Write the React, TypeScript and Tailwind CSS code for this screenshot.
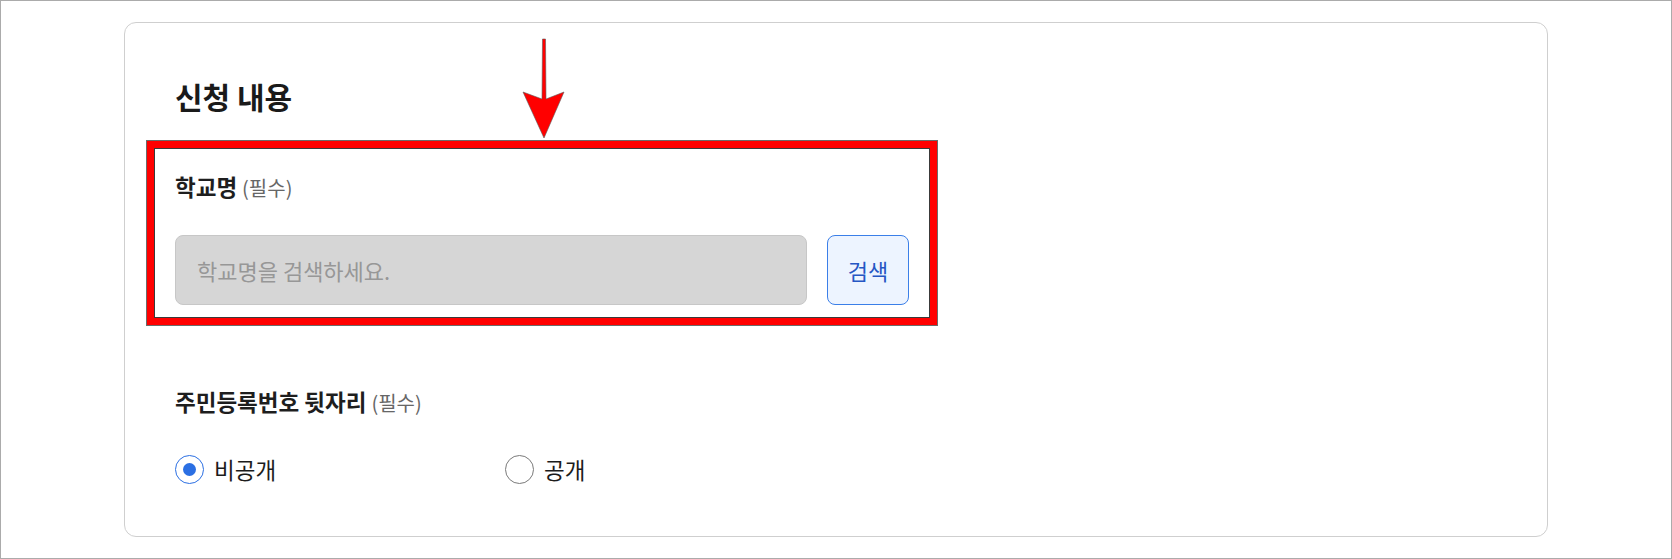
import React from "react";

const font = "font-['Noto_Sans_CJK_KR','Noto_Sans',sans-serif]";

const Required: React.FC = () => (
  <span className="ml-[5px] text-[20px] font-normal text-[#666]">(필수)</span>
);

const Radio: React.FC<{ label: string; checked?: boolean }> = ({ label, checked }) => (
  <label className="flex w-[330px] items-center gap-[10px] cursor-pointer">
    {checked ? (
      <span className="flex h-[29px] w-[29px] items-center justify-center rounded-full border-[1.5px] border-[#2b6fe3]">
        <span className="h-[13px] w-[13px] rounded-full bg-[#2b6fe3]"></span>
      </span>
    ) : (
      <span className="h-[29px] w-[29px] rounded-full border border-[#7a7a7a]"></span>
    )}
    <span className="text-[22.5px] leading-none text-[#1c1c1c]">{label}</span>
  </label>
);

const App: React.FC = () => {
  return (
    <div className={`relative h-[559px] w-full border border-[#ababab] bg-white ${font}`}>
      {/* card */}
      <div className="mx-auto mt-[21px] h-[515px] w-[1424px] rounded-[12px] border border-[#cfcfcf] pl-[50px] pt-[58px]">
        <h2 className="text-[30px] font-bold leading-none text-[#1a1a1a]">신청 내용</h2>

        {/* school name */}
        <div className="relative mt-[64px] w-[734px]">
          {/* annotation box */}
          <div className="pointer-events-none absolute -left-[28px] -right-[28px] -top-[34px] -bottom-[20px] border-[7px] border-[#ff0000] shadow-[0_0_0_1px_#6b6b6b,inset_0_0_0_1px_#3a3a3a]"></div>
          <div className="text-[22.5px] font-bold leading-none text-[#1e1e1e]">
            학교명
            <Required />
          </div>
          <div className="mt-[37px] flex gap-[20px]">
            <input
              disabled
              placeholder="학교명을 검색하세요."
              className="h-[70px] w-[632px] rounded-[8px] border border-[#c7c7c7] bg-[#d6d6d6] px-[21px] text-[22px] placeholder:text-[#979797]"
            />
            <button className="h-[70px] w-[82px] rounded-[8px] border border-[#3b7fe8] bg-[#edf4ff] text-[22px] text-[#2556c4]">
              검색
            </button>
          </div>
        </div>

        {/* resident number */}
        <div className="mt-[85px] text-[22.5px] font-bold leading-none text-[#1e1e1e]">
          주민등록번호 뒷자리
          <Required />
        </div>
        <div className="mt-[42px] flex">
          <Radio label="비공개" checked />
          <Radio label="공개" />
        </div>
      </div>

      {/* annotation arrow */}
      <svg className="pointer-events-none absolute left-0 top-0" width="1672" height="559">
        <polygon
          points="541.5,38 544.5,38 545,98 563,91 543,137 522,91 541,98"
          fill="#ff0000"
          stroke="#5a5a5a"
          strokeWidth="0.6"
        />
      </svg>
    </div>
  );
};

export default App;
